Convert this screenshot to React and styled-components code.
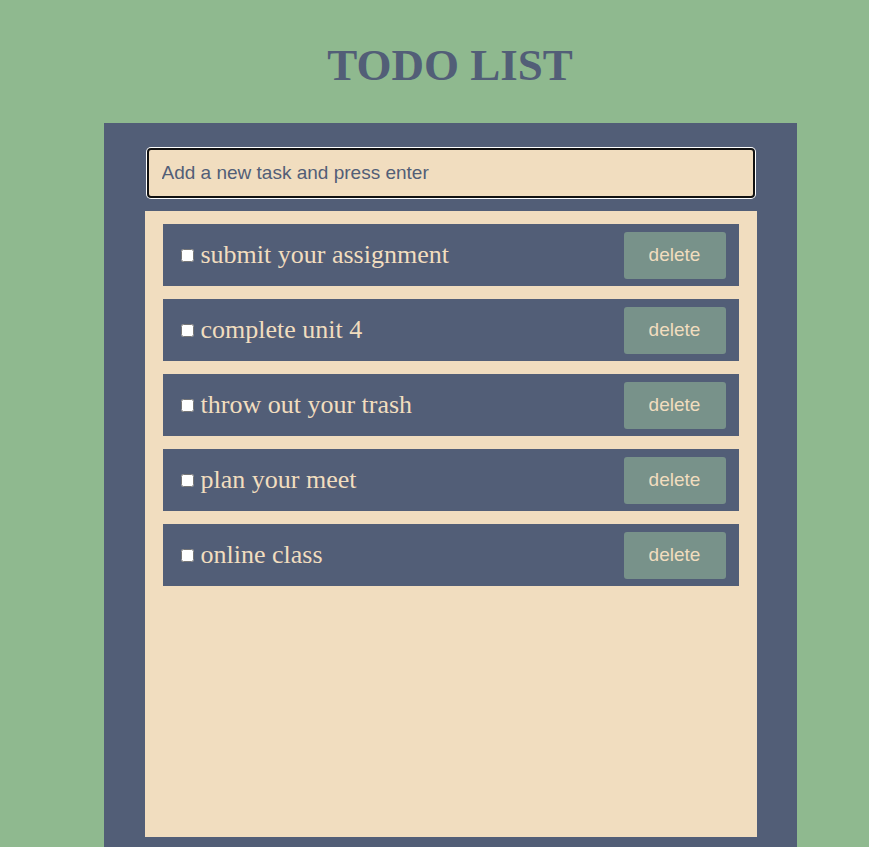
import React, { useState } from "react";
import styled, { createGlobalStyle } from "styled-components";

const Global = createGlobalStyle`
  html, body { margin: 0; padding: 0; }
  body { background: #8fb98f; font-family: "Liberation Serif", serif; overflow: hidden; }
`;

const Page = styled.div`
  display: flex;
  flex-direction: column;
  align-items: center;
  min-height: 847px;
  padding-left: 31px;
`;

const Title = styled.h1`
  margin: 42px 0 35px;
  font-family: "Liberation Serif", serif;
  font-weight: 700;
  font-size: 45px;
  line-height: 46px;
  color: #525e77;
`;

const Panel = styled.div`
  width: 693px;
  background: #525e77;
  padding: 25px 40px 10px 41px;
  box-sizing: border-box;
  display: flex;
  flex-direction: column;
  gap: 13px;
  flex: 1;
`;

const Input = styled.input`
  box-sizing: border-box;
  width: 608px;
  height: 50px;
  margin-left: 2px;
  background: #f1ddbf;
  border: 2px solid #111;
  border-radius: 4px;
  box-shadow: 0 0 0 1px #fff;
  padding: 0 13px;
  font-family: "Liberation Sans", Arial, sans-serif;
  font-size: 19px;
  color: #525e77;
  outline: none;
  &::placeholder { color: #525e77; }
`;

const List = styled.div`
  background: #f1ddbf;
  width: 612px;
  height: 626px;
  box-sizing: border-box;
  padding: 13px 18px;
  display: flex;
  flex-direction: column;
  gap: 13px;
`;

const Item = styled.div`
  height: 62px;
  background: #525e77;
  display: flex;
  align-items: center;
  padding: 0 13px 0 14px;
  box-sizing: border-box;
`;

const Check = styled.input`
  width: 13px;
  height: 13px;
  margin: 0 3px 0 4px;
  border-radius: 2px;
`;

const Label = styled.span`
  flex: 1;
  margin-left: 4px;
  font-family: "Liberation Serif", serif;
  font-size: 26px;
  color: #f1ddbf;
  line-height: 1;
`;

const DeleteButton = styled.button`
  width: 102px;
  height: 47px;
  border: none;
  border-radius: 3px;
  background: #78928a;
  color: #f1ddbf;
  font-family: "Liberation Sans", Arial, sans-serif;
  font-size: 19px;
  cursor: pointer;
`;

const initial = [
  "submit your assignment",
  "complete unit 4",
  "throw out your trash",
  "plan your meet",
  "online class",
];

export default function App() {
  const [tasks, setTasks] = useState(initial);
  const [text, setText] = useState("");
  return (
    <Page>
      <Global />
      <Title>TODO LIST</Title>
      <Panel>
        <Input
          placeholder="Add a new task and press enter"
          value={text}
          onChange={(e) => setText(e.target.value)}
          onKeyDown={(e) => {
            if (e.key === "Enter" && text.trim()) {
              setTasks([...tasks, text.trim()]);
              setText("");
            }
          }}
        />
        <List>
          {tasks.map((t, i) => (
            <Item key={i}>
              <Check type="checkbox" />
              <Label>{t}</Label>
              <DeleteButton onClick={() => setTasks(tasks.filter((_, j) => j !== i))}>
                delete
              </DeleteButton>
            </Item>
          ))}
        </List>
      </Panel>
    </Page>
  );
}
